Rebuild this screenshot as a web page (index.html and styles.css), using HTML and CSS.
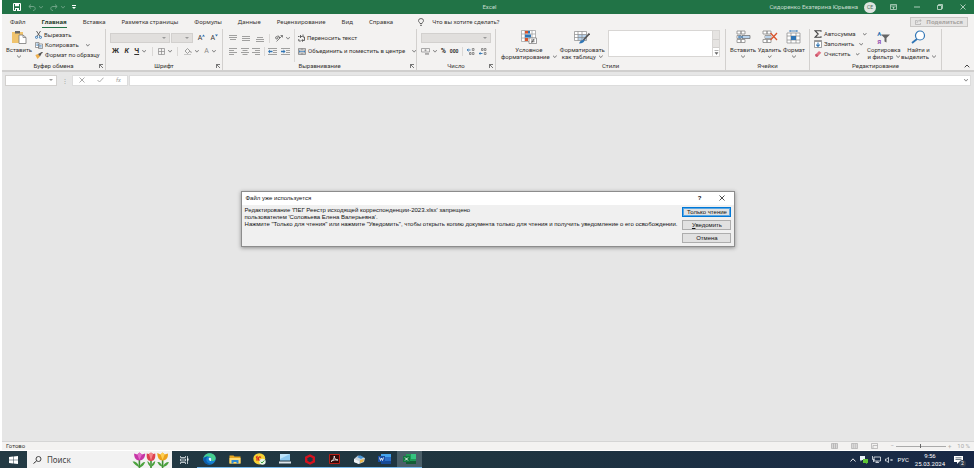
FILE: index.html
```
<!DOCTYPE html>
<html lang="ru">
<head>
    <meta charset="UTF-8">
    <meta name="viewport" content="width=device-width, initial-scale=1.0">
    <title>Excel</title>
    <link rel="stylesheet" href="styles.css">
</head>
<body>

<div class="window">

    <!-- Title bar -->
    <header class="titlebar">
        <div class="quick">
            <button aria-label="Сохранить"><svg width="8" height="8" viewBox="0 0 8 8"><path d="M.5.5h7v7h-7z" fill="none" stroke="#fff"/><path d="M2 .5h4v2.700H2zM2 5h4v3H2z" fill="#fff"/><path d="M3 6h1v2H3z" fill="#217346"/></svg></button>
            <button class="faded" aria-label="Отменить"><svg width="8" height="7" viewBox="0 0 8 7"><path d="M3 .5L.8 2.500 3 4.500M1 2.500h4c3 0 3 4 0 4" fill="none" stroke="#fff"/></svg><span class="chev light"></span></button>
            <button class="faded" aria-label="Вернуть"><svg width="8" height="7" viewBox="0 0 8 7"><path d="M5 .5l2.200 2L5 4.500M7 2.500H3c-3 0-3 4 0 4" fill="none" stroke="#fff"/></svg><span class="chev light"></span></button>
            <button aria-label="Настройка панели"><svg width="4" height="4" viewBox="0 0 4 4"><path d="M0 0h4v1H0zM0 2h4L2 4z" fill="#fff"/></svg></button>
        </div>
        <h1>Excel</h1>
        <div class="account">
            <span>Сидоренко Екатерина Юрьевна</span>
            <span class="avatar">СЕ</span>
            <button aria-label="Параметры ленты"><svg width="7" height="6" viewBox="0 0 7 6"><path d="M.5.5h6v5h-6zM.5 2h6M3.500 5V3M2.500 4l1-1 1 1" fill="none" stroke="#cfe3d7" stroke-width=".7"/></svg></button>
            <button aria-label="Свернуть"><svg width="6" height="6" viewBox="0 0 6 6"><path d="M0 3h6" stroke="#cfe3d7" stroke-width=".8"/></svg></button>
            <button aria-label="Развернуть"><svg width="6" height="6" viewBox="0 0 6 6"><path d="M.5 1.500h4v4h-4zM1.500 1.500v-1h4v4h-1" fill="none" stroke="#cfe3d7" stroke-width=".8"/></svg></button>
            <button aria-label="Закрыть"><svg width="6" height="6" viewBox="0 0 6 6"><path d="M.5.5l5 5M5.500.5l-5 5" stroke="#cfe3d7" stroke-width=".8"/></svg></button>
        </div>
    </header>

    <!-- Ribbon tabs -->
    <nav class="tabs">
        <a href="#file">Файл</a>
        <a href="#home" class="active">Главная</a>
        <a href="#insert">Вставка</a>
        <a href="#layout">Разметка страницы</a>
        <a href="#formulas">Формулы</a>
        <a href="#data">Данные</a>
        <a href="#review">Рецензирование</a>
        <a href="#view">Вид</a>
        <a href="#help">Справка</a>
        <button class="tellme"><svg width="6" height="8" viewBox="0 0 6 8"><path d="M2 5.500C1.900 4.500.5 4 .5 2.700a2.500 2.200 0 0 1 5 0C5.500 4 4.100 4.500 4 5.500zM2 7.300h2" fill="none" stroke="#444" stroke-width=".8"/></svg>Что вы хотите сделать?</button>
        <button class="share" disabled><svg width="7" height="6" viewBox="0 0 7 6"><path d="M2.500 1.500h-2v4h5V4M2 4c0-2 1-2.500 4-2.500M4.700.2L6.200 1.500 4.700 3" fill="none" stroke="#aaa" stroke-width=".7"/></svg>Поделиться</button>
    </nav>

    <!-- Ribbon -->
    <section class="ribbon" id="home">
        <div class="group">
            <div class="tools">
                <button class="big"><svg width="16" height="14" viewBox="0 0 16 14"><path d="M1 2h11v11H1z" fill="#f0c36d"/><path d="M4 1h5v2.500H4z" fill="#666"/><path d="M8 5h4l3 2.500V13.500H8z" fill="#fff" stroke="#777" stroke-width=".8"/><path d="M12 5v2.500h3" fill="none" stroke="#777" stroke-width=".7"/></svg>Вставить<span class="chev"></span></button>
                <div class="stack clip">
                    <button><svg width="7" height="8" viewBox="0 0 7 8"><path d="M1.500 0l3.500 5.500M5.500 0L2 5.500" stroke="#555" stroke-width=".9"/><circle cx="1.500" cy="6.300" r="1.100" fill="none" stroke="#2f75b5" stroke-width=".9"/><circle cx="5.500" cy="6.300" r="1.100" fill="none" stroke="#2f75b5" stroke-width=".9"/></svg>Вырезать</button>
                    <button><svg width="8" height="7" viewBox="0 0 8 7"><path d="M.5.5h3.500v5H.5zM3.500 2h4v4.500h-4z" fill="#fff" stroke="#777" stroke-width=".7"/><path d="M1.300 2h2M1.300 3.300h2M4.300 3.700h2.400M4.300 5h2.400" stroke="#2f75b5" stroke-width=".7"/></svg>Копировать<span class="chev gap"></span></button>
                    <button><svg width="8" height="7" viewBox="0 0 8 7"><path d="M.3 3l2.700-1 2 2.500L2.500 7z" fill="#eeb04f"/><path d="M3 2l2.500-1.200.9 1.200L5 4.500z" fill="#555"/><path d="M5.500 1.500L7.500.3" stroke="#444" stroke-width="1.200"/></svg>Формат по образцу</button>
                </div>
            </div>
            <h2>Буфер обмена</h2>
            <button class="launch" aria-label="Буфер обмена"></button>
        </div>

        <div class="group">
            <div class="tools rows">
                <div class="line">
                    <select class="font" aria-label="Шрифт" disabled><option></option></select>
                    <select class="size" aria-label="Размер" disabled><option></option></select>
                    <button class="glyph grow" aria-label="Увеличить">A<svg width="3" height="3" viewBox="0 0 3 3"><path d="M0 2.500L1.500.5 3 2.500z" fill="#2f75b5"/></svg></button>
                    <button class="glyph shrink" aria-label="Уменьшить">A<svg width="3" height="3" viewBox="0 0 3 3"><path d="M0 .5h3L1.500 2.500z" fill="#2f75b5"/></svg></button>
                </div>
                <div class="line marks letters">
                    <button class="bold">Ж</button>
                    <button class="bold italic">К</button>
                    <button class="bold"><u>Ч</u><span class="chev"></span></button>
                    <span class="rule"></span>
                    <button class="dim" aria-label="Границы"><svg width="7" height="7" viewBox="0 0 7 7"><path d="M.5.5h6v6h-6zM3.500.5v6M.5 3.500h6" fill="none" stroke="#888" stroke-width=".7"/></svg><span class="chev"></span></button>
                    <span class="rule"></span>
                    <button class="dim" aria-label="Заливка"><svg width="8" height="7" viewBox="0 0 8 7"><path d="M1 3l2.500-2.500L6 3 3.500 5.500zM6.500 3l.8 2" fill="none" stroke="#888" stroke-width=".8"/><path d="M0 6.200h7v.8H0z" fill="#bbb"/></svg><span class="chev"></span></button>
                    <button class="dim">A<span class="chev"></span></button>
                </div>
            </div>
            <h2>Шрифт</h2>
            <button class="launch" aria-label="Шрифт"></button>
        </div>

        <div class="group">
            <div class="tools align">
                <div class="rows">
                    <div class="line marks">
                        <button aria-label="По верхнему краю"><svg width="8" height="7" viewBox="0 0 8 7"><path d="M0 .5h8M0 2.500h8M1 4.500h6" stroke="#8a8a8a" stroke-width=".8"/></svg></button>
                        <button aria-label="По середине"><svg width="8" height="7" viewBox="0 0 8 7"><path d="M0 1.500h8M0 3.500h8M0 5.500h8" stroke="#8a8a8a" stroke-width=".8"/></svg></button>
                        <button aria-label="По нижнему краю"><svg width="8" height="7" viewBox="0 0 8 7"><path d="M1 2.500h6M0 4.500h8M0 6.500h8" stroke="#8a8a8a" stroke-width=".8"/></svg></button>
                        <span class="rule"></span>
                        <button aria-label="Ориентация"><svg width="8" height="8" viewBox="0 0 8 8"><path d="M1.500 7.500l6-6M5.500 1.500h2v2" fill="none" stroke="#666" stroke-width=".8"/><circle cx="1.800" cy="3.800" r="1.200" fill="none" stroke="#555" stroke-width=".8"/><path d="M3 1.500l2 2.500" stroke="#555"/></svg><span class="chev"></span></button>
                    </div>
                    <div class="line marks">
                        <button aria-label="По левому краю"><svg width="8" height="7" viewBox="0 0 8 7"><path d="M0 .5h8M0 2.500h5M0 4.500h8M0 6.500h5" stroke="#8a8a8a" stroke-width=".8"/></svg></button>
                        <button aria-label="По центру"><svg width="8" height="7" viewBox="0 0 8 7"><path d="M0 .5h8M1.500 2.500h5M0 4.500h8M1.500 6.500h5" stroke="#8a8a8a" stroke-width=".8"/></svg></button>
                        <button aria-label="По правому краю"><svg width="8" height="7" viewBox="0 0 8 7"><path d="M0 .5h8M3 2.500h5M0 4.500h8M3 6.500h5" stroke="#8a8a8a" stroke-width=".8"/></svg></button>
                        <span class="rule"></span>
                        <button aria-label="Уменьшить отступ"><svg width="9" height="7" viewBox="0 0 9 7"><path d="M0 .5h9M5 2.500h4M5 4.500h4M0 6.500h9" stroke="#8a8a8a" stroke-width=".8"/><path d="M0 3.500L2 1.500v1.200h2.500v1.600H2v1.200z" fill="#2f75b5"/></svg></button>
                        <button aria-label="Увеличить отступ"><svg width="9" height="7" viewBox="0 0 9 7"><path d="M0 .5h9M5 2.500h4M5 4.500h4M0 6.500h9" stroke="#8a8a8a" stroke-width=".8"/><path d="M4.500 3.500l-2-2v1.200H0v1.600h2.500v1.200z" fill="#2f75b5"/></svg></button>
                    </div>
                </div>
                <div class="rows merge">
                    <button class="line"><svg width="7" height="8" viewBox="0 0 7 8"><path d="M0 2.500h1.500M2.500 1v3M2.500 2.500h2M.8 5v2h2M5 .5v2.500h1.500v3.500H4M5 5.200L3.700 6.500 5 7.700" fill="none" stroke="#555" stroke-width=".9"/></svg>Переносить текст</button>
                    <button class="line"><svg width="8" height="7" viewBox="0 0 8 7"><path d="M.5.5h7v6h-7zM.5 2h7M.5 5h7M4 .5V2M4 5v1.500" fill="none" stroke="#777" stroke-width=".7"/><path d="M1 3.500h6M2 2.700l-1 .8 1 .8M6 2.700l1 .8-1 .8" fill="none" stroke="#2f75b5" stroke-width=".7"/></svg>Объединить и поместить в центре<span class="chev gap"></span></button>
                </div>
            </div>
            <h2>Выравнивание</h2>
            <button class="launch" aria-label="Выравнивание"></button>
        </div>

        <div class="group">
            <div class="tools rows">
                <div class="line"><select class="number" aria-label="Числовой формат" disabled><option></option></select></div>
                <div class="line marks">
                    <button class="dim" aria-label="Финансовый формат"><svg width="9" height="7" viewBox="0 0 9 7"><path d="M.5.5h8v3.500h-8z" fill="none" stroke="#888" stroke-width=".7"/><circle cx="4.500" cy="2.200" r="1" fill="#999"/><path d="M4 5.500h4M4 6.700h4" stroke="#888" stroke-width=".7"/></svg><span class="chev"></span></button>
                    <button class="bold percent">%</button>
                    <button class="bold thousands">000</button>
                    <span class="rule"></span>
                    <button aria-label="Увеличить разрядность"><svg width="8" height="7" viewBox="0 0 8 7"><path d="M0 2h3.500M1.500.7L.2 2l1.300 1.300" fill="none" stroke="#2f75b5" stroke-width=".9"/><path d="M5.300.5h1.700v2H5.300zM2.500 4.500h1.500v2H2.500zM5.300 4.500h1.700v2H5.300z" fill="none" stroke="#777" stroke-width=".8"/></svg></button>
                    <button aria-label="Уменьшить разрядность"><svg width="8" height="7" viewBox="0 0 8 7"><path d="M0 5.500h3.500M1.500 4.200L.2 5.500l1.300 1.300" fill="none" stroke="#2f75b5" stroke-width=".9"/><path d="M5.300.5h1.700v2H5.300zM2.500.5h1.500v2H2.500zM5.300 4.500h1.700v2H5.300z" fill="none" stroke="#777" stroke-width=".8"/></svg></button>
                </div>
            </div>
            <h2>Число</h2>
            <button class="launch" aria-label="Число"></button>
        </div>

        <div class="group">
            <div class="tools styles">
                <button class="big"><svg width="16" height="14" viewBox="0 0 16 14"><path d="M.5.5h14v11H.5zM.5 4h14M.5 8h14M4 .5v11M11 .5v11" fill="#fff" stroke="#999" stroke-width=".7"/><path d="M4 1h3v2.500H4zM4 8h3v3H4z" fill="#d9532c"/><path d="M4 4.500h6V7.500H4zM7 1h2v2.500H7z" fill="#2f75b5"/><path d="M8 8h7.500v5.500H8z" fill="#fff" stroke="#777" stroke-width=".7"/><path d="M10 10h3.500M10 11.700h3.500M13 9l-2.500 4" stroke="#444" stroke-width=".7"/></svg>Условное<span class="second">форматирование<span class="chev"></span></span></button>
                <button class="big"><svg width="16" height="14" viewBox="0 0 16 14"><path d="M.5 1.500h12v9H.5z" fill="#fff"/><path d="M4 4.500h8.500v6H4z" fill="#b9d3ec"/><path d="M.5 1.500h12v9H.5zM.5 4.500h12M.5 7.500h12M4 1.500v9M8 1.500v9" fill="none" stroke="#888" stroke-width=".7"/><path d="M15.500 3.500L9.500 10" stroke="#555" stroke-width="1.800"/><path d="M5 13.500c1-3 3-4 5.500-3.500 0 2-2 3.500-5.500 3.500z" fill="#2f75b5"/></svg>Форматировать<span class="second">как таблицу<span class="chev"></span></span></button>
                <div class="gallery">
                    <div class="swatches"></div>
                    <div class="scroll">
                        <button aria-label="Вверх" disabled></button>
                        <button aria-label="Вниз" disabled></button>
                        <button aria-label="Ещё" class="more"><svg width="5" height="5" viewBox="0 0 5 5"><path d="M.5.5h4M1 2.500h3L2.500 4.500z" fill="#666" stroke="#666" stroke-width=".5"/></svg></button>
                    </div>
                </div>
            </div>
            <h2>Стили</h2>
        </div>

        <div class="group">
            <div class="tools cells">
                <button class="big"><svg width="15" height="14" viewBox="0 0 15 14"><path d="M1 1h4v3H1zM5 1h4v3H5zM1 9.500h4v3H1zM5 9.500h4v3H5zM1 5.500h4v3H1z" fill="#fff" stroke="#888" stroke-width=".8"/><path d="M6 5.500h8v3H6z" fill="#b9d3ec" stroke="#666" stroke-width=".7"/><path d="M7 7H2.500M4 5.500L2.500 7 4 8.500" fill="none" stroke="#2f75b5"/></svg>Вставить<span class="chev"></span></button>
                <button class="big"><svg width="16" height="14" viewBox="0 0 16 14"><path d="M1 1h4v3H1zM5 1h4v3H5zM1 9.500h4v3H1zM5 9.500h4v3H5zM3 5.500h6v3H3z" fill="#fff" stroke="#888" stroke-width=".8"/><path d="M3.500 6h5v2h-5z" fill="#b9d3ec"/><path d="M8.500 3l6.500 7M15 3L8.500 10" stroke="#d9532c" stroke-width="1.300"/></svg>Удалить<span class="chev"></span></button>
                <button class="big"><svg width="15" height="14" viewBox="0 0 15 14"><path d="M1 3h13v10H1z" fill="#fff"/><path d="M1 3h13v10H1zM1 6h13M1 10h13M5 3v10M10 3v10" fill="none" stroke="#888" stroke-width=".7"/><path d="M5 6h5v4H5z" fill="#2f75b5"/><path d="M4 1h7M4 0v2M11 0v2" stroke="#2f75b5" stroke-width=".8"/></svg>Формат<span class="chev"></span></button>
            </div>
            <h2>Ячейки</h2>
        </div>

        <div class="group">
            <div class="tools edit">
                <div class="stack">
                    <button><svg width="8" height="8" viewBox="0 0 8 8"><path d="M7 1.800V.7H1L4.200 4 1 7.300h6V6.200" fill="none" stroke="#444" stroke-width="1.100"/></svg>Автосумма<span class="chev gap"></span></button>
                    <button><svg width="8" height="8" viewBox="0 0 8 8"><path d="M.5.5h7v7h-7z" fill="#fff" stroke="#777" stroke-width=".7"/><path d="M.5.5h7v1.500h-7z" fill="#999"/><path d="M4 2.500v4M2.300 4.700L4 6.500l1.700-1.800" fill="none" stroke="#2f75b5" stroke-width="1.100"/></svg>Заполнить<span class="chev"></span></button>
                    <button><svg width="8" height="8" viewBox="0 0 8 8"><path d="M1 5l4-4 2.300 1.700-4 4H2z" fill="#e57385"/><path d="M1 5l1.200-1.200L4.500 5.500 3.300 6.700H2z" fill="#c9566c"/></svg>Очистить<span class="chev"></span></button>
                </div>
                <button class="big"><span class="sort"><span class="az"><b>А</b><b>Я</b></span><svg width="9" height="9" viewBox="0 0 9 9"><path d="M0 .5h9L5.500 4v4.500l-2-1V4z" fill="#666"/></svg></span>Сортировка<span class="second">и фильтр<span class="chev"></span></span></button>
                <button class="big"><svg width="15" height="14" viewBox="0 0 15 14"><circle cx="9" cy="5.500" r="4.500" fill="#fff" stroke="#2f75b5" stroke-width="1.200"/><path d="M6 9L1 13" stroke="#2f75b5" stroke-width="1.800"/></svg>Найти и<span class="second">выделить<span class="chev"></span></span></button>
            </div>
            <h2>Редактирование</h2>
        </div>

        <div class="group last">
            <button class="collapse" aria-label="Свернуть ленту"><svg width="6" height="4" viewBox="0 0 6 4"><path d="M.7 3.300L3 1l2.300 2.300" fill="none" stroke="#444"/></svg></button>
        </div>
    </section>

    <!-- Formula bar -->
    <div class="formula">
        <select class="namebox" aria-label="Имя"><option></option></select>
        <span class="dots">⋮</span>
        <div class="fx">
            <button aria-label="Отмена"><svg width="6" height="6" viewBox="0 0 6 6"><path d="M.5.5l5 5M5.500.5l-5 5" stroke="#aaa"/></svg></button>
            <button aria-label="Ввод"><svg width="7" height="6" viewBox="0 0 7 6"><path d="M.5 3L2.500 5 6.500.7" fill="none" stroke="#aaa"/></svg></button>
            <button><i>fx</i></button>
        </div>
        <div class="entry">
            <input type="text" aria-label="Строка формул">
            <span class="chev"></span>
        </div>
    </div>

    <!-- Empty workspace with the dialog -->
    <main class="workspace">
        <div class="dialog" role="dialog" aria-labelledby="dialog-title">
            <div class="dialog-head">
                <span id="dialog-title">Файл уже используется</span>
                <button class="bold" aria-label="Справка">?</button>
                <button aria-label="Закрыть"><svg width="6" height="6" viewBox="0 0 6 6"><path d="M.5.5l5 5M5.500.5l-5 5" stroke="#222" stroke-width=".8"/></svg></button>
            </div>
            <div class="dialog-body">
                <p>Редактирование 'ПЕГ Реестр исходящей корреспонденции-2023.xlsx' запрещено<br>
                пользователем 'Соловьева Елена Валерьевна'.<br>
                Нажмите "Только для чтения" или нажмите "Уведомить", чтобы открыть копию документа только для чтения и получить уведомление о его освобождении.</p>
                <div class="actions">
                    <button class="default"><span>Только <u>ч</u>тение</span></button>
                    <button><span><u>У</u>ведомить</span></button>
                    <button>Отмена</button>
                </div>
            </div>
        </div>
    </main>

    <footer class="status">
        <span>Готово</span>
        <div class="views">
            <svg width="7" height="6" viewBox="0 0 7 6"><path d="M.5.5h6v5h-6zM.5 2h6M.5 4h6M2.500.5v5M4.500.5v5" fill="none" stroke="#aaa" stroke-width=".7"/></svg>
            <svg width="7" height="6" viewBox="0 0 7 6"><path d="M.5.5h6v5h-6zM2 .5v5M5 .5v5M2 2h3M2 4h3" fill="none" stroke="#aaa" stroke-width=".7"/></svg>
            <svg width="7" height="6" viewBox="0 0 7 6"><path d="M.5.5h6v5h-6zM2 5.500v-3h4.500" fill="none" stroke="#aaa" stroke-width=".7"/></svg>
            <div class="zoom"><span>−</span><input type="range" aria-label="Масштаб" disabled><span>+</span></div>
            <span class="percentage">10 %</span>
        </div>
    </footer>
</div>

<!-- Windows taskbar -->
<div class="taskbar">
    <button class="start" aria-label="Пуск"><svg width="9" height="8" viewBox="0 0 9 8"><path d="M0 1l4-.6v3.300H0zM4.500.4L9 0v3.700H4.500zM0 4.300h4v3.300L0 7zM4.500 4.300H9V8l-4.500-.4z" fill="#fff"/></svg></button>
    <label class="search">
        <svg width="9" height="8" viewBox="0 0 9 8"><circle cx="5.500" cy="3" r="2.500" fill="none" stroke="#333" stroke-width=".9"/><path d="M3.500 5L.5 7.500" stroke="#333"/></svg>
        <input type="text" placeholder="Поиск">
        <svg class="tulips" width="38" height="16" viewBox="0 0 36 16" preserveAspectRatio="none">
            <path d="M7 16V7M18 16V7M29 16V7" stroke="#3f8f35" stroke-width="1.500"/>
            <path d="M6.500 15C4 14 2 12 .5 9.500 4 9 6 12 7 15 8 12 10 10 12.500 10c-1 3-3 5-5 5.500zM18 15c-2-1-3-3-3.500-6 2 1 3 3 3.500 6 .5-3 2-5 4-6 0 3-1.500 5-4 6zM29 15c-3-1-4-3-5-5 3 0 4 2 5 5 1-3 3-5 6-5-1 3-3 4.500-6 5z" fill="#4ca23e"/>
            <path d="M2 1.500l3 1L7 .5l2.500 2 3-1c0 4-2 7-5.500 7S2 5.500 2 1.500z" fill="#c636a6"/><path d="M5 2.500L7 .5l2.500 2L7 8z" fill="#e36cc9"/>
            <path d="M14 1.500l2 .5 2-1.500L20 2l2-.5c.5 4-.5 7.500-4 7.500s-4.500-3.500-4-7.500z" fill="#dd4250"/><path d="M16 2l2-1.500L20 2l-2 6.500z" fill="#f4858a"/>
            <path d="M24 1l3 1.500L29 .5l2 2 3-1c.5 4-1.500 7-5 7s-5-3-5-7.500z" fill="#eba11c"/><path d="M27 2.500l2-2 2 2L29 8z" fill="#ffcf52"/>
        </svg>
    </label>
    <div class="apps">
        <button aria-label="Представление задач"><svg width="9" height="8" viewBox="0 0 9 8"><path d="M.5 0v1.500h5V0M.5 8V6.500h5V8M.5 3h5v2h-5zM7.500 0v8" fill="none" stroke="#dfe6ea" stroke-width=".8"/><path d="M7 2.500h1.500v2H7z" fill="#fff"/></svg></button>
        <button class="open" aria-label="Edge"><svg width="13" height="12" viewBox="0 0 13 12"><ellipse cx="6.500" cy="6" rx="6.200" ry="5.700" fill="#1681d2"/><path d="M.4 5.500C1 2 4 .3 6.700.3c3.500 0 6 2.300 6 5 0 2.300-2 3-3.700 2.700C8 7.700 8.500 7 8.500 6c0-1.500-1.500-2.500-3.500-2.500-2.200 0-4 .8-4.600 2z" fill="#46cf8e"/><path d="M.4 5.500c1-1.500 3-2 4.600-2-1.500 1-2 2.500-1.500 4.200C4 9.700 6 11 8.500 10.500 5 13 .5 10.500.4 5.500z" fill="#0d5cab"/><path d="M6 5c1.300-.5 2.400.2 2.300 1.200-.1.900-.7 1.500.3 1.800-1.600.5-3.600-1.400-2.600-3z" fill="#e8f6ff"/></svg></button>
        <button class="open" aria-label="Проводник"><svg width="12" height="9" viewBox="0 0 12 9"><path d="M.5.5h4l1 1h6V8.500H.5z" fill="#e9a820"/><path d="M.5 3h11v5.500H.5z" fill="#ffdc72"/><path d="M2.500 5h7v3.500h-2V7h-3v1.500h-2z" fill="#2d8ad4"/></svg></button>
        <button class="open" aria-label="1С"><svg width="13" height="12" viewBox="0 0 13 12"><ellipse cx="6.300" cy="5.800" rx="6" ry="5.600" fill="#f7d235"/><path d="M3 4.500l1-.8v4M8 4.500C6 3 5 5 5.500 6.500S7 7.500 8.500 7" fill="none" stroke="#d5271d" stroke-width="1.200"/><ellipse cx="9.500" cy="8.700" rx="3.200" ry="3" fill="#e9f5e5"/><path d="M7.800 8.800l1.200 1.200 2.300-2.500" fill="none" stroke="#39a23b"/></svg></button>
        <button class="open" aria-label="Компьютер"><svg width="12" height="10" viewBox="0 0 12 10"><path d="M1 0h10v6.500H1z" fill="#8cc8ef"/><path d="M1 0h10L1 5z" fill="#bee4fa"/><path d="M0 7.500h12V9.500H0z" fill="#dce5eb"/></svg></button>
        <button class="open" aria-label="Обмен"><svg width="12" height="11" viewBox="0 0 12 11"><path d="M6 1.500l3.800 2v4L6 9.500l-3.800-2v-4z" fill="none" stroke="#d5121e" stroke-width="2.400"/></svg></button>
        <button class="open" aria-label="Acrobat"><svg width="11" height="10" viewBox="0 0 11 10"><path d="M.5.5h10v9H.5z" fill="#330c0b" stroke="#b81e17"/><path d="M2 7.500C4 6.500 5.500 4 5.300 2c-.5 2 1.500 4.300 3.700 4C6.500 5.500 4 6 2 7.500z" fill="none" stroke="#fff" stroke-width=".8"/></svg></button>
        <button class="open" aria-label="Сканер"><svg width="13" height="9" viewBox="0 0 13 9"><path d="M1 4l4-3.500 7 2.500-1 4-5 2-5-2z" fill="#c9d4dc"/><path d="M4 2l3-1.800 4 2L8 4z" fill="#4a95d4"/><path d="M1 4l5 2v3L1 7z" fill="#edf1f4"/><path d="M7 5l4-1-.5 2.500L7 8z" fill="#e8b64c"/></svg></button>
        <button class="open" aria-label="Word"><svg width="13" height="10" viewBox="0 0 13 10"><path d="M3 0h10v10H3z" fill="#2b6fc9"/><path d="M3 0h10v3H3z" fill="#45a5ee"/><path d="M3 7h10v3H3z" fill="#174a96"/><path d="M0 2h7v6H0z" fill="#184fa5"/><path d="M1.500 3.500l1 3 1-2.500 1 2.500 1-3" fill="none" stroke="#fff" stroke-width=".8"/></svg></button>
        <button class="open current" aria-label="Excel"><svg width="13" height="10" viewBox="0 0 13 10"><path d="M3 0h10v10H3z" fill="#1e9a56"/><path d="M8 0h5v5H8z" fill="#35c481"/><path d="M3 7h10v3H3z" fill="#145c36"/><path d="M0 2h7v6H0z" fill="#107a3f"/><path d="M2 3.500l3 3M5 3.500l-3 3" stroke="#fff" stroke-width=".9"/></svg></button>
    </div>
    <div class="tray">
        <svg width="6" height="4" viewBox="0 0 6 4"><path d="M.5 3.500L3 .8l2.500 2.700" fill="none" stroke="#fff" stroke-width=".9"/></svg>
        <svg width="8" height="8" viewBox="0 0 8 8"><path d="M0 0h5v4H2L.5 5.500V4H0z" fill="#e8f1f8"/><path d="M3 3h5v4H7v1L5.500 7H3z" fill="#5fc637"/></svg>
        <svg width="9" height="7" viewBox="0 0 9 7"><path d="M2 1h6.500v4H2zM3.500 6.500h3.500M5 5v1.500M.5 0v3.500h2M1.500 3.500V6" fill="none" stroke="#e6ebf0" stroke-width=".8"/></svg>
        <svg width="8" height="6" viewBox="0 0 8 6"><path d="M.5 2h1L3.500.5v5L1.500 4h-1zM5.500 2l2 2M7.500 2l-2 2" fill="none" stroke="#e6ebf0" stroke-width=".8"/></svg>
        <span>РУС</span>
        <time>9:56<br>25.03.2024</time>
        <button class="notes" aria-label="Уведомления"><svg width="9" height="8" viewBox="0 0 9 8"><path d="M0 0h9v6H5L3 8V6H0z" fill="#fff"/><path d="M1.500 1.800h6M1.500 3.500h6" stroke="#345" stroke-width=".7"/></svg><span class="badge">2</span></button>
    </div>
</div>

</body>
</html>
```
FILE: styles.css
```
/* General styles */
:root {
    --green: #217346;
    --panel: #f3f2f1;
    --line: #c8c6c4;
}

* {
    box-sizing: border-box;
}

body {
    margin: 0;
    min-height: 100vh;
    display: flex;
    flex-direction: column;
    background-color: #fff;
    color: #33312f;
    font: 6px/8px Roboto, "Noto Sans", sans-serif;
}

button, input, select {
    margin: 0;
    padding: 0;
    border: 0;
    background: none;
    color: inherit;
    font: inherit;
}

button {
    display: inline-flex;
    align-items: center;
    justify-content: center;
    white-space: nowrap;
}

svg {
    display: block;
    flex: none;
}

h1, h2, p {
    margin: 0;
    font-size: 6px;
    font-weight: normal;
}

.chev {
    width: 4px;
    height: 3px;
    margin-left: 3px;
    flex: none;
    background: #777;
    clip-path: polygon(0 0, 50% 70%, 100% 0, 100% 30%, 50% 100%, 0 30%);
}

.chev.light {
    background: #fff;
}

.chev.gap {
    margin-left: 5px;
}

.window {
    flex: 1;
    display: flex;
    flex-direction: column;
    margin-left: 2px;
}

/* Title bar */
.titlebar {
    display: grid;
    grid-template-columns: 1fr auto 1fr;
    align-items: center;
    height: 14px;
    padding: 0 8px 0 11px;
    background-color: var(--green);
    color: #c5dccf;
}

.quick {
    display: flex;
    align-items: center;
    gap: 7px;
}

.faded {
    opacity: 0.35;
}

.account {
    display: flex;
    align-items: center;
    justify-content: flex-end;
}

.avatar {
    width: 12px;
    height: 11px;
    margin: 0 14px 0 6px;
    border-radius: 50%;
    background-color: #dfe5e1;
    color: #4b6b5a;
    font-size: 5px;
    line-height: 11px;
    text-align: center;
}

.account button + button {
    margin-left: 17px;
}

/* Tabs */
.tabs {
    display: flex;
    align-items: center;
    gap: 16px;
    height: 15px;
    padding: 0 6px 0 8px;
    background-color: var(--panel);
    font-family: "Noto Sans", sans-serif;
}

.tabs a {
    height: 12px;
    line-height: 12px;
    color: inherit;
    text-decoration: none;
    white-space: nowrap;
}

.tabs .active {
    border-bottom: 1px solid var(--green);
    color: #1f3d2c;
    font-weight: bold;
}

.tellme {
    gap: 8px;
    margin-left: 9px;
}

.share {
    gap: 4px;
    height: 10px;
    margin-left: auto;
    padding: 0 4px;
    border: 1px solid var(--line);
    background-color: #e6e5e4;
    color: #a6a4a2;
    font-weight: bold;
}

/* Ribbon */
.ribbon {
    display: grid;
    grid-template-columns:
        minmax(0, 104fr) minmax(0, 117fr) minmax(0, 194fr) minmax(0, 79fr)
        minmax(0, 230fr) minmax(0, 84fr) minmax(0, 132fr) minmax(0, 32fr);
    height: 41px;
    background-color: var(--panel);
}

.group {
    position: relative;
    display: flex;
    flex-direction: column;
    border-right: 1px solid #d2d0ce;
}

.group.last {
    border: 0;
    justify-content: flex-end;
    align-items: flex-end;
    padding: 0 4px 2px 0;
}

.group h2 {
    height: 8px;
    text-align: center;
}

.tools {
    flex: 1;
    display: flex;
    padding: 0 4px;
}

.big {
    flex-direction: column;
    justify-content: flex-start;
    padding-top: 1px;
    line-height: 7px;
}

.big > svg {
    margin-bottom: 2px;
}

.big > .chev {
    margin: 2px 0 0;
}

.second {
    display: flex;
    align-items: center;
}

.stack {
    display: flex;
    flex-direction: column;
    align-items: flex-start;
    gap: 2px;
    padding-top: 1px;
}

.stack button {
    gap: 2px;
}

.stack.clip {
    margin-left: 3px;
    padding-top: 2px;
}

.rows {
    display: flex;
    flex-direction: column;
    gap: 3px;
    padding-top: 4px;
}

.line {
    display: flex;
    align-items: center;
    height: 10px;
}

.marks {
    justify-content: space-between;
    padding-right: 4px;
}

.letters {
    padding: 0 2px;
    font-size: 7px;
}

.rule {
    width: 1px;
    height: 9px;
    background-color: #dad8d6;
}

.bold {
    font-weight: bold;
}

.italic {
    font-style: italic;
}

.dim {
    color: #8a8886;
}

.percent {
    font-size: 7px;
}

.thousands {
    font-size: 5px;
}

.glyph {
    margin-left: 5px;
    align-items: flex-start;
    font-size: 7px;
}

select {
    height: 10px;
    appearance: none;
    border: 1px solid #d2d0ce;
    background: no-repeat right 3px center url("data:image/svg+xml,%3Csvg xmlns='http://www.w3.org/2000/svg' width='4' height='2'%3E%3Cpath d='M0 0h4L2 2z' fill='%23999'/%3E%3C/svg%3E");
}

select:disabled {
    background-color: #e1dfdd;
    opacity: 1;
}

.font {
    flex: 3;
    margin-right: 1px;
}

.size {
    flex: 1;
}

.number {
    flex: 1;
}

.align {
    padding-left: 6px;
}

.align > .rows {
    flex: none;
    width: 65px;
}

.align > .merge {
    flex: 1;
    width: auto;
    padding-left: 3px;
    border-left: 1px solid #dad8d6;
}

.merge .line {
    justify-content: flex-start;
    gap: 2px;
}

.launch {
    position: absolute;
    right: 2px;
    bottom: 2px;
    width: 4px;
    height: 4px;
    border: solid #777;
    border-width: 1px 0 0 1px;
    background: linear-gradient(45deg, transparent 40%, #777 40%, #777 60%, transparent 60%);
}

.styles {
    gap: 3px;
    padding: 0 5px;
}

.gallery {
    flex: 1;
    display: flex;
    height: 27px;
    margin-top: 1px;
    border: 1px solid #d8d6d4;
    background-color: #fff;
}

.swatches {
    flex: 1;
}

.scroll {
    display: flex;
    flex-direction: column;
    width: 7px;
    border-left: 1px solid #d8d6d4;
}

.scroll button {
    flex: 1;
    background-color: #e6e4e2;
    border-bottom: 1px solid #d2d0ce;
}

.scroll .more {
    background-color: #fff;
    border: 0;
}

.cells {
    justify-content: space-between;
}

.edit {
    justify-content: space-between;
    padding-right: 5px;
}

.sort {
    display: flex;
    align-items: center;
    height: 16px;
}

.az {
    display: flex;
    flex-direction: column;
    color: #2f75b5;
    line-height: 8px;
}

.az b + b {
    color: #8e44ad;
}

/* Formula bar */
.formula {
    display: flex;
    align-items: center;
    height: 18px;
    padding: 0 3px;
    border-top: 2px solid #d0cfce;
    background-color: #e6e6e6;
}

.formula > * {
    height: 11px;
}

.namebox {
    width: 52px;
    background-color: #fff;
}

.dots {
    width: 15px;
    color: #999;
    line-height: 11px;
    text-align: center;
}

.fx {
    display: flex;
    justify-content: space-around;
    width: 56px;
    background-color: #fff;
    border: 1px solid #dcdcdc;
    color: #999;
}

.entry {
    flex: 1;
    display: flex;
    align-items: center;
    margin-left: 1px;
    padding-right: 2px;
    border: 1px solid #dcdcdc;
    background-color: #fff;
}

.entry input {
    flex: 1;
    min-width: 0;
}

/* Workspace and dialog */
.workspace {
    flex: 1;
    display: flex;
    align-items: center;
    justify-content: center;
    padding-bottom: 92px;
    background-color: #e6e6e6;
}

.dialog {
    border: 1px solid #8c8c8c;
    background-color: #f0f0f0;
    box-shadow: 0 1px 4px rgba(0, 0, 0, 0.4);
    color: #111;
    font-family: "Liberation Sans", Arial, sans-serif;
}

.dialog-head {
    display: flex;
    align-items: center;
    height: 13px;
    padding: 0 9px 0 4px;
    background-color: #fff;
}

.dialog-head span {
    flex: 1;
}

.dialog-head button + button {
    margin-left: 18px;
}

.dialog-body {
    display: flex;
    gap: 5px;
    padding: 2px 3px 3px;
}

.dialog-body p {
    line-height: 7px;
    white-space: nowrap;
}

.actions {
    display: flex;
    flex-direction: column;
    gap: 3px;
    width: 49px;
}

.actions button {
    height: 10px;
    border: 1px solid #adadad;
    background-color: #e1e1e1;
}

.actions .default {
    border-color: #0078d7;
    outline: 1px solid #5ba7e3;
    outline-offset: -2px;
}

/* Status bar */
.status {
    display: flex;
    align-items: center;
    justify-content: space-between;
    height: 9px;
    padding: 0 4px;
    border-top: 1px solid #d5d5d5;
    background-color: var(--panel);
}

.views {
    display: flex;
    align-items: center;
    gap: 13px;
    color: #aaa;
}

.zoom {
    display: flex;
    align-items: center;
    gap: 2px;
}

.zoom input {
    width: 50px;
    height: 5px;
    appearance: none;
    background: linear-gradient(#aaa, #aaa) no-repeat center / 100% 1px;
}

.zoom input::-webkit-slider-thumb {
    appearance: none;
    width: 1px;
    height: 4px;
    background-color: #666;
}

.percentage {
    margin-left: -7px;
}

/* Taskbar */
.taskbar {
    display: flex;
    align-items: stretch;
    height: 17px;
    margin-top: 1px;
    background: linear-gradient(90deg, #233a44, #1f3540 50%, #182846);
    color: #fff;
}

.start {
    width: 27px;
}

.search {
    display: flex;
    align-items: center;
    width: 145px;
    padding: 0 2px 0 6px;
    background-color: #f2f2f2;
    color: #333;
}

.search input {
    flex: 1;
    min-width: 0;
    margin-left: 5px;
    font-size: 8px;
    font-family: "Noto Sans", sans-serif;
}

.search input::placeholder {
    color: #444;
}

.apps {
    display: flex;
}

.apps button {
    width: 25px;
}

.apps .open {
    border-bottom: 1px solid #76b9ed;
}

.apps .current {
    background-color: #4a5f69;
}

.tray {
    display: flex;
    align-items: center;
    gap: 4px;
    margin-left: auto;
    padding-right: 11px;
}

.tray time {
    margin-left: 2px;
    line-height: 8px;
    text-align: center;
}

.notes {
    position: relative;
    margin-left: 5px;
}

.badge {
    position: absolute;
    right: -3px;
    bottom: -3px;
    width: 7px;
    height: 7px;
    border-radius: 50%;
    background-color: #333e4f;
    font-size: 5px;
    line-height: 7px;
}
```
